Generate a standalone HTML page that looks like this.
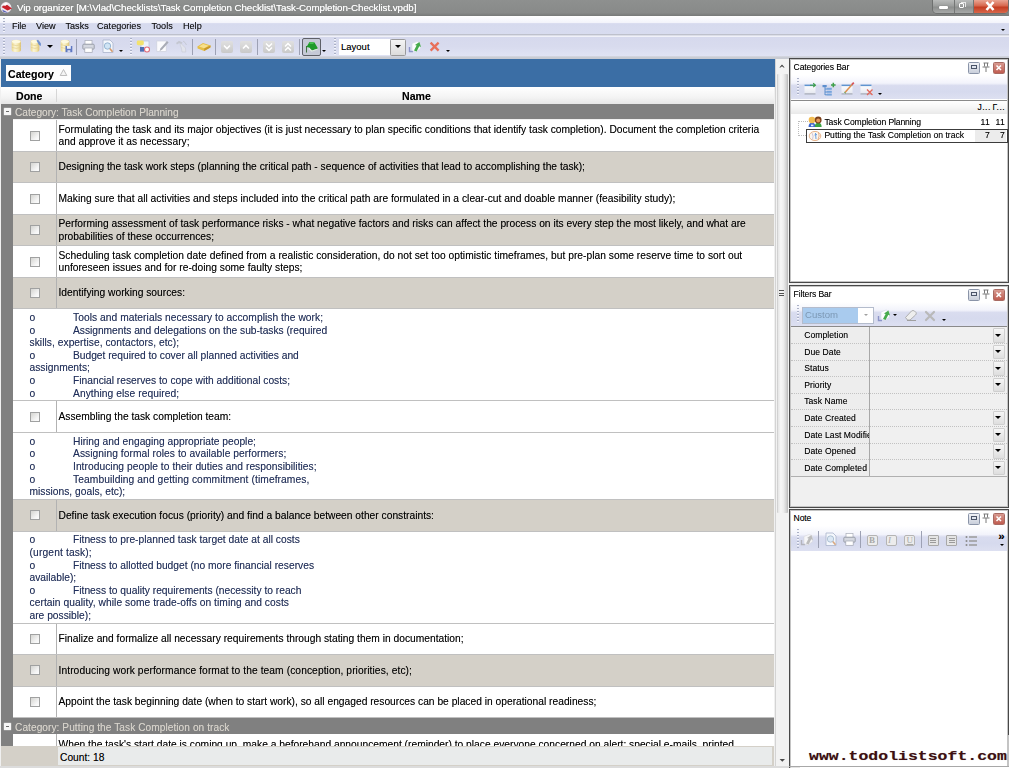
<!DOCTYPE html>
<html><head><meta charset="utf-8"><title>Vip organizer</title>
<style>
html,body{margin:0;padding:0;background:#f0f0f0;}
body{width:1009px;height:768px;overflow:hidden;position:relative;font-family:"Liberation Sans",sans-serif;font-size:10.25px;color:#000;}
.a{position:absolute;}
.t{position:absolute;white-space:pre;line-height:12.6px;text-shadow:0 0 .6px rgba(0,0,0,.4);}
#titlebar{left:0;top:0;width:1009px;height:15.5px;background:linear-gradient(#8e908f,#888a89 80%,#777978);}
#menubar{left:0;top:15.5px;width:1009px;height:19px;background:linear-gradient(#ffffff 0,#f3f4fb 6.5px,#eceef8 7px,#d6daee 7.6px,#d8dcef 100%);}
#toolbar{left:0;top:37px;width:1009px;height:19px;background:linear-gradient(#d6d9ed 0,#d8dbee 50%,#e0e3f3 100%);}
.row{position:absolute;left:13px;width:761px;}
.gray{background:#d4d0c8;}
.white{background:#fff;}
.cb{position:absolute;width:8px;height:8px;border:1px solid #a0a1a1;background:linear-gradient(135deg,#d9d9d6 10%,#f6f6f6 70%,#fdfdfd);}
.grp{position:absolute;left:1px;width:773px;background:#808080;color:#d4d0c8;height:15.5px;}
.note{color:#1f2f5f;}
.grip{width:1.5px;background:repeating-linear-gradient(#aab0c6 0,#aab0c6 1px,#f4f5fb 1px,#f4f5fb 2px,transparent 2px,transparent 3px);}
.m{top:19.8px;font-size:9.1px;color:#111;}
.arr{position:absolute;width:0;height:0;border-style:solid;border-color:#000 transparent transparent transparent;border-width:3px 3px 0 3px;}
.arr.s{border-width:2.4px 2.2px 0 2.2px;}
.sep{top:38.5px;width:1px;height:16.5px;background:#9da1b4;}
.gb{top:41px;width:12px;height:11.5px;border-radius:2px;background:linear-gradient(#e0e0e0,#c9c9c9);}
.p{font-size:8.6px;line-height:11px;letter-spacing:-.12px;}
.sep2{top:530.5px;width:1px;height:17px;background:#9da1b4;}
#wrap{position:absolute;left:0;top:0;width:1009px;height:768px;overflow:hidden;opacity:.999;}
</style></head><body><div id="wrap">
<!-- title bar -->
<div class="a" id="titlebar"></div>
<div class="t" style="left:17px;top:1.8px;color:#fff;font-size:9.8px;letter-spacing:-.08px;text-shadow:0 0 .7px rgba(255,255,255,.9),0 0 1.5px #6a6c6b;">Vip organizer [M:\Vlad\Checklists\Task Completion Checklist\Task-Completion-Checklist.vpdb]</div>
<div class="a" id="menubar"></div>
<div class="a" style="left:0;top:34px;width:1009px;height:1px;background:#bec1cc;"></div><div class="a" style="left:0;top:35px;width:1009px;height:1px;background:#dcdee8;"></div><div class="a" style="left:0;top:36px;width:1009px;height:1px;background:#f0f1f8;"></div>
<div class="a" id="toolbar"></div>
<div class="a" style="left:0;top:56px;width:1009px;height:3px;background:linear-gradient(#d6d8e2,#c9ccd4 50%,#c6c9d1);"></div>

<!-- main grid -->
<div class="a" id="blueband" style="left:1px;top:59px;width:773.5px;height:28px;background:#3b6ea5;"></div>
<div class="a" style="left:6px;top:65px;width:65px;height:16px;background:#fdfdfd;"></div>
<div class="a" id="hdr" style="left:1px;top:87px;width:773px;height:16.5px;background:linear-gradient(#fff,#f4f4f4 60%,#e6e6e6);"></div>
<div class="a" id="stripe" style="left:1px;top:104px;width:12px;height:642px;background:#808080;"></div>
<div class="grp" style="top:103.70px;height:15.6px;"></div>
<div class="a" style="left:4.3px;top:108.00px;width:6.6px;height:6.6px;background:#f6f6f6;border-radius:.5px;box-shadow:0 0 0 .5px #a8a8a8;"></div>
<div class="a" style="left:5.8px;top:110.80px;width:3.7px;height:1.1px;background:#6a6a6a;"></div>
<div class="t" style="left:15px;top:106.50px;color:#d8d4cc;font-size:10.15px;text-shadow:0 0 .5px rgba(216,212,204,.5);">Category: Task Completion Planning</div>
<div class="row white" style="top:119.75px;height:31.50px;"></div>
<div class="a" style="left:56px;top:119.75px;width:1px;height:31.50px;background:#b2b2b2;"></div>
<div class="cb" style="left:29.5px;top:130.50px;"></div>
<div class="t" style="left:58.5px;top:123.50px;">Formulating the task and its major objectives (it is just necessary to plan specific conditions that identify task completion). Document the completion criteria</div>
<div class="t" style="left:58.5px;top:136.10px;">and approve it as necessary;</div>
<div class="row gray" style="top:151.25px;height:31.50px;"></div>
<div class="a" style="left:56px;top:151.25px;width:1px;height:31.50px;background:#b2b2b2;"></div>
<div class="cb" style="left:29.5px;top:162.00px;"></div>
<div class="t" style="left:58.5px;top:161.30px;">Designing the task work steps (planning the critical path - sequence of activities that lead to accomplishing the task);</div>
<div class="row white" style="top:182.75px;height:31.50px;"></div>
<div class="a" style="left:56px;top:182.75px;width:1px;height:31.50px;background:#b2b2b2;"></div>
<div class="cb" style="left:29.5px;top:193.50px;"></div>
<div class="t" style="left:58.5px;top:192.80px;letter-spacing:0.019px;">Making sure that all activities and steps included into the critical path are formulated in a clear-cut and doable manner (feasibility study);</div>
<div class="row gray" style="top:214.25px;height:31.50px;"></div>
<div class="a" style="left:56px;top:214.25px;width:1px;height:31.50px;background:#b2b2b2;"></div>
<div class="cb" style="left:29.5px;top:225.00px;"></div>
<div class="t" style="left:58.5px;top:218.00px;">Performing assessment of task performance risks - what negative factors and risks can affect the process on its every step the most likely, and what are</div>
<div class="t" style="left:58.5px;top:230.60px;">probabilities of these occurrences;</div>
<div class="row white" style="top:245.75px;height:31.50px;"></div>
<div class="a" style="left:56px;top:245.75px;width:1px;height:31.50px;background:#b2b2b2;"></div>
<div class="cb" style="left:29.5px;top:256.50px;"></div>
<div class="t" style="left:58.5px;top:249.50px;letter-spacing:0.023px;">Scheduling task completion date defined from a realistic consideration, do not set too optimistic timeframes, but pre-plan some reserve time to sort out</div>
<div class="t" style="left:58.5px;top:262.10px;">unforeseen issues and for re-doing some faulty steps;</div>
<div class="row gray" style="top:277.25px;height:31.50px;"></div>
<div class="a" style="left:56px;top:277.25px;width:1px;height:31.50px;background:#b2b2b2;"></div>
<div class="cb" style="left:29.5px;top:288.00px;"></div>
<div class="t" style="left:58.5px;top:287.30px;">Identifying working sources:</div>
<div class="row white" style="top:308.75px;height:92.20px;"></div>
<div class="t note" style="left:29.5px;top:312.05px;">o</div>
<div class="t note" style="left:73px;top:312.05px;letter-spacing:0.043px;">Tools and materials necessary to accomplish the work;</div>
<div class="t note" style="left:29.5px;top:324.65px;">o</div>
<div class="t note" style="left:73px;top:324.65px;letter-spacing:-0.03px;">Assignments and delegations on the sub-tasks (required</div>
<div class="t note" style="left:29.5px;top:337.25px;letter-spacing:0.04px;">skills, expertise, contactors, etc);</div>
<div class="t note" style="left:29.5px;top:349.85px;">o</div>
<div class="t note" style="left:73px;top:349.85px;letter-spacing:-0.02px;">Budget required to cover all planned activities and</div>
<div class="t note" style="left:29.5px;top:362.45px;">assignments;</div>
<div class="t note" style="left:29.5px;top:375.05px;">o</div>
<div class="t note" style="left:73px;top:375.05px;">Financial reserves to cope with additional costs;</div>
<div class="t note" style="left:29.5px;top:387.65px;">o</div>
<div class="t note" style="left:73px;top:387.65px;letter-spacing:0.06px;">Anything else required;</div>
<div class="row white" style="top:400.95px;height:31.50px;"></div>
<div class="a" style="left:56px;top:400.95px;width:1px;height:31.50px;background:#b2b2b2;"></div>
<div class="cb" style="left:29.5px;top:411.70px;"></div>
<div class="t" style="left:58.5px;top:411.00px;">Assembling the task completion team:</div>
<div class="row white" style="top:432.45px;height:67.10px;"></div>
<div class="t note" style="left:29.5px;top:435.75px;">o</div>
<div class="t note" style="left:73px;top:435.75px;">Hiring and engaging appropriate people;</div>
<div class="t note" style="left:29.5px;top:448.35px;">o</div>
<div class="t note" style="left:73px;top:448.35px;letter-spacing:0.053px;">Assigning formal roles to available performers;</div>
<div class="t note" style="left:29.5px;top:460.95px;">o</div>
<div class="t note" style="left:73px;top:460.95px;letter-spacing:0.036px;">Introducing people to their duties and responsibilities;</div>
<div class="t note" style="left:29.5px;top:473.55px;">o</div>
<div class="t note" style="left:73px;top:473.55px;letter-spacing:0.083px;">Teambuilding and getting commitment (timeframes,</div>
<div class="t note" style="left:29.5px;top:486.15px;">missions, goals, etc);</div>
<div class="row gray" style="top:499.55px;height:31.50px;"></div>
<div class="a" style="left:56px;top:499.55px;width:1px;height:31.50px;background:#b2b2b2;"></div>
<div class="cb" style="left:29.5px;top:510.30px;"></div>
<div class="t" style="left:58.5px;top:509.60px;">Define task execution focus (priority) and find a balance between other constraints:</div>
<div class="row white" style="top:531.05px;height:92.10px;"></div>
<div class="t note" style="left:29.5px;top:534.35px;">o</div>
<div class="t note" style="left:73px;top:534.35px;">Fitness to pre-planned task target date at all costs</div>
<div class="t note" style="left:29.5px;top:546.95px;letter-spacing:0.14px;">(urgent task);</div>
<div class="t note" style="left:29.5px;top:559.55px;">o</div>
<div class="t note" style="left:73px;top:559.55px;">Fitness to allotted budget (no more financial reserves</div>
<div class="t note" style="left:29.5px;top:572.15px;">available);</div>
<div class="t note" style="left:29.5px;top:584.75px;">o</div>
<div class="t note" style="left:73px;top:584.75px;">Fitness to quality requirements (necessity to reach</div>
<div class="t note" style="left:29.5px;top:597.35px;letter-spacing:0.05px;">certain quality, while some trade-offs on timing and costs</div>
<div class="t note" style="left:29.5px;top:609.95px;">are possible);</div>
<div class="row white" style="top:623.15px;height:31.50px;"></div>
<div class="a" style="left:56px;top:623.15px;width:1px;height:31.50px;background:#b2b2b2;"></div>
<div class="cb" style="left:29.5px;top:633.90px;"></div>
<div class="t" style="left:58.5px;top:633.20px;">Finalize and formalize all necessary requirements through stating them in documentation;</div>
<div class="row gray" style="top:654.65px;height:31.50px;"></div>
<div class="a" style="left:56px;top:654.65px;width:1px;height:31.50px;background:#b2b2b2;"></div>
<div class="cb" style="left:29.5px;top:665.40px;"></div>
<div class="t" style="left:58.5px;top:664.70px;letter-spacing:0.077px;">Introducing work performance format to the team (conception, priorities, etc);</div>
<div class="row white" style="top:686.15px;height:31.50px;"></div>
<div class="a" style="left:56px;top:686.15px;width:1px;height:31.50px;background:#b2b2b2;"></div>
<div class="cb" style="left:29.5px;top:696.90px;"></div>
<div class="t" style="left:58.5px;top:696.20px;">Appoint the task beginning date (when to start work), so all engaged resources can be placed in operational readiness;</div>
<div class="a" style="left:13px;top:151px;width:761px;height:1px;background:#c0c0c0;"></div>
<div class="a" style="left:13px;top:182px;width:761px;height:1px;background:#c0c0c0;"></div>
<div class="a" style="left:13px;top:214px;width:761px;height:1px;background:#c0c0c0;"></div>
<div class="a" style="left:13px;top:245px;width:761px;height:1px;background:#c0c0c0;"></div>
<div class="a" style="left:13px;top:277px;width:761px;height:1px;background:#c0c0c0;"></div>
<div class="a" style="left:13px;top:308px;width:761px;height:1px;background:#c0c0c0;"></div>
<div class="a" style="left:13px;top:400px;width:761px;height:1px;background:#c0c0c0;"></div>
<div class="a" style="left:13px;top:432px;width:761px;height:1px;background:#c0c0c0;"></div>
<div class="a" style="left:13px;top:499px;width:761px;height:1px;background:#c0c0c0;"></div>
<div class="a" style="left:13px;top:531px;width:761px;height:1px;background:#c0c0c0;"></div>
<div class="a" style="left:13px;top:623px;width:761px;height:1px;background:#c0c0c0;"></div>
<div class="a" style="left:13px;top:654px;width:761px;height:1px;background:#c0c0c0;"></div>
<div class="a" style="left:13px;top:686px;width:761px;height:1px;background:#c0c0c0;"></div>
<div class="a" style="left:13px;top:717px;width:761px;height:1px;background:#c0c0c0;"></div>
<div class="grp" style="top:717.65px;height:16.5px;"></div>
<div class="a" style="left:4.3px;top:723.05px;width:6.6px;height:6.6px;background:#f6f6f6;border-radius:.5px;box-shadow:0 0 0 .5px #a8a8a8;"></div>
<div class="a" style="left:5.8px;top:725.85px;width:3.7px;height:1.1px;background:#6a6a6a;"></div>
<div class="t" style="left:15px;top:721.55px;color:#d8d4cc;font-size:10.15px;text-shadow:0 0 .5px rgba(216,212,204,.5);letter-spacing:0.065px;">Category: Putting the Task Completion on track</div>
<div class="row white" style="top:734.15px;height:11.5px;"></div>
<div class="a" style="left:56px;top:734.15px;width:1px;height:12px;background:#b2b2b2;"></div>
<div class="a" style="left:57px;top:734.15px;width:717px;height:11.5px;overflow:hidden;"><div class="t" style="left:1.5px;top:5.2px;">When the task's start date is coming up, make a beforehand announcement (reminder) to place everyone concerned on alert: special e-mails, printed</div></div>
<!-- app icon -->
<svg class="a" style="left:0;top:1.3px;" width="13" height="13" viewBox="0 0 13 13"><circle cx="6" cy="6.5" r="5.4" fill="#ece4ec"/><path d="M1.5 6 L6 3 L12 7.5 L7.5 9.5 Z" fill="#c8202a"/><path d="M2 8.5 L6 10.5 L8 12 L3.5 11 Z" fill="#5a64b8"/><path d="M3 3.5 L6 1.5 L8 3 L5 5 Z" fill="#fff"/></svg>
<!-- window buttons -->
<div class="a" style="left:933px;top:0;width:74.5px;height:12.5px;border-radius:0 0 4px 4px;background:linear-gradient(#b9bbba,#9c9e9d 45%,#8d8f8e 55%,#a7a9a8);box-shadow:0 0 0 1px #6e706f;"></div>
<div class="a" style="left:973px;top:0;width:34.5px;height:12.5px;border-radius:0 0 4px 0;background:linear-gradient(#e9a593,#d7674e 45%,#c43d22 55%,#d9674a);"></div>
<div class="a" style="left:953.5px;top:0;width:1px;height:12.5px;background:#747675;"></div>
<div class="a" style="left:972.5px;top:0;width:1px;height:12.5px;background:#747675;"></div>
<div class="a" style="left:939px;top:6px;width:9px;height:2.5px;background:#fff;border-radius:1px;box-shadow:0 0 1px #555;"></div>
<div class="a" style="left:958.8px;top:3.2px;width:3.6px;height:3.2px;border:1.6px solid #fff;border-radius:1px;box-shadow:0 0 1px #555;"></div><div class="a" style="left:960.5px;top:1.8px;width:4.5px;height:1.2px;background:#e8e8e8;"></div><div class="a" style="left:965px;top:1.8px;width:1.2px;height:5px;background:#e8e8e8;"></div>
<svg class="a" style="left:984px;top:1px;" width="12" height="10" viewBox="0 0 12 10"><path d="M2.5 1 L9.5 9 M9.5 1 L2.5 9" stroke="#fff" stroke-width="2.6"/></svg>
<!-- menubar grips -->
<div class="a grip" style="left:3px;top:18px;height:14px;"></div>
<div class="a grip" style="left:3px;top:38px;height:17px;"></div>
<div class="a grip" style="left:130px;top:38px;height:17px;"></div>
<div class="a grip" style="left:334px;top:38px;height:17px;"></div>
<div class="t m" style="left:12px;letter-spacing:-.15px;">File</div>
<div class="t m" style="left:36px;">View</div>
<div class="t m" style="left:65.5px;">Tasks</div>
<div class="t m" style="left:97px;">Categories</div>
<div class="t m" style="left:151.5px;">Tools</div>
<div class="t m" style="left:183px;">Help</div>
<div class="arr s" style="left:1001px;top:28.5px;"></div>
<!-- toolbar icons -->
<svg class="a" style="left:0;top:0;" width="0" height="0"><defs><linearGradient id="cg" x1="0" x2="1" y1="0" y2="0"><stop offset="0" stop-color="#ecd98e"/><stop offset=".35" stop-color="#fbf5d6"/><stop offset=".7" stop-color="#f3e6ad"/><stop offset="1" stop-color="#d9bf74"/></linearGradient></defs></svg>
<svg class="a" style="left:11px;top:39px;" width="11" height="14" viewBox="0 0 11 14"><path d="M.7 2.6 Q.7 .8 5.3 .8 Q10 .8 10 2.6 V11 Q10 13 5.3 13 Q.7 13 .7 11 Z" fill="url(#cg)"/><ellipse cx="5.3" cy="2.6" rx="4.4" ry="1.6" fill="#fdf9e0"/><path d="M.9 5.6 Q5.3 7.6 9.8 5.6 M.9 8.4 Q5.3 10.4 9.8 8.4" stroke="#e3cf8c" fill="none" stroke-width=".7"/></svg>
<svg class="a" style="left:30px;top:39px;" width="12" height="14" viewBox="0 0 12 14"><path d="M.7 2.6 Q.7 .8 5 .8 Q9.3 .8 9.3 2.6 V11 Q9.3 13 5 13 Q.7 13 .7 11 Z" fill="url(#cg)"/><ellipse cx="5" cy="2.6" rx="4" ry="1.6" fill="#fdf9e0"/><path d="M.9 5.6 Q5 7.6 9.1 5.6 M.9 8.4 Q5 10.4 9.1 8.4" stroke="#e3cf8c" fill="none" stroke-width=".7"/><path d="M6.5 1.5 L8 .8 L11 4.5 L10.8 7 L9 6 Z" fill="#6d8fcf"/></svg>
<div class="arr" style="left:47px;top:44.8px;border-width:3.2px 3.1px 0 3.1px;"></div>
<svg class="a" style="left:59.5px;top:39px;" width="13" height="14" viewBox="0 0 13 14"><path d="M.7 2.6 Q.7 .8 5 .8 Q9.3 .8 9.3 2.6 V11 Q9.3 13 5 13 Q.7 13 .7 11 Z" fill="url(#cg)"/><ellipse cx="5" cy="2.6" rx="4" ry="1.6" fill="#fdf9e0"/><path d="M.9 5.6 Q5 7.6 9.1 5.6 M.9 8.4 Q5 10.4 9.1 8.4" stroke="#e3cf8c" fill="none" stroke-width=".7"/><rect x="5.5" y="7" width="6.8" height="6.2" fill="#5f78c2"/><rect x="7" y="7" width="3.8" height="2.8" fill="#eef1fa"/><rect x="7.5" y="11.2" width="2.8" height="2" fill="#d5daf0"/></svg>
<div class="a sep" style="left:76px;"></div>
<svg class="a" style="left:82px;top:40px;" width="13" height="13" viewBox="0 0 13 13"><rect x="3" y="0.5" width="7" height="4" fill="#fff" stroke="#a9adb8" stroke-width=".7"/><rect x="0.8" y="4.2" width="11.4" height="5" rx="1" fill="#d5d8e0" stroke="#8c909c" stroke-width=".8"/><rect x="2.8" y="8" width="7.4" height="4.3" fill="#fff" stroke="#a0a4b0" stroke-width=".7"/></svg>
<svg class="a" style="left:101px;top:39px;" width="14" height="15" viewBox="0 0 14 15"><path d="M2 1 H9 L12 4 V13.5 H2 Z" fill="#f4f7fc" stroke="#aab4cc" stroke-width=".8"/><circle cx="6.5" cy="7" r="3.2" fill="#cfe4f4" stroke="#8fb0cf" stroke-width=".9"/><path d="M8.8 9.6 L11.5 12.8" stroke="#d69a6a" stroke-width="1.6"/></svg>
<div class="arr s" style="left:119px;top:50px;"></div>
<!-- toolbar 2 -->
<svg class="a" style="left:136px;top:39px;" width="15" height="15" viewBox="0 0 15 15"><rect x="5" y="2" width="8" height="10" fill="#eef3fb" stroke="#b4c2de" stroke-width=".7"/><rect x=".8" y="1.6" width="7" height="4.6" rx="1.4" fill="#f3e26e"/><rect x="4" y="8" width="4.2" height="4.6" fill="#4f6fb4"/><circle cx="11" cy="10.5" r="2.5" fill="#fff" stroke="#e26a78" stroke-width="1.1"/></svg>
<svg class="a" style="left:155px;top:39px;" width="15" height="15" viewBox="0 0 15 15"><rect x="1.8" y="2" width="9.4" height="10.4" fill="#fbfbfd" stroke="#cfd2dc" stroke-width=".7"/><path d="M4.6 12 L5.4 9.4 L12 2 L13.6 3.4 L7 10.8 Z" fill="#a9acb6"/></svg>
<svg class="a" style="left:174px;top:39px;" width="15" height="15" viewBox="0 0 15 15"><path d="M2 4 L5 1.8 L8.5 3.5 L7.8 5 L5 4.2 L3 5.4 Z" fill="#c4c7d1"/><path d="M7 4.5 L11.5 9 L11.8 13 L8 13 L7.4 9 L6 5.8 Z" fill="#e2e4ec" stroke="#c6c9d4" stroke-width=".6"/><path d="M9 2 L11 3.5 L12.5 6" stroke="#c4c7d1" stroke-width=".9" fill="none"/></svg>
<div class="a sep" style="left:192px;"></div>
<svg class="a" style="left:196px;top:41px;" width="16" height="12" viewBox="0 0 16 12"><path d="M1.4 5.6 L7 2 L14.6 4.4 L14.4 6.6 L8.2 10 L1.6 7.4 Z" fill="#e6bf48"/><path d="M3 5.6 L7.1 3.1 L12.6 4.8 L8.2 7.2 Z" fill="#f7e08e"/><path d="M8.2 7.4 L14.6 4.6 L14.4 6.6 L8.2 10 Z" fill="#c8982c"/></svg>
<div class="a sep" style="left:215px;"></div>
<div class="a gb" style="left:221px;"></div><svg class="a" style="left:221px;top:41px;" width="12" height="12" viewBox="0 0 12 12"><path d="M3 4.5 L6 7.5 L9 4.5" stroke="#fff" stroke-width="1.6" fill="none"/></svg>
<div class="a gb" style="left:240px;"></div><svg class="a" style="left:240px;top:41px;" width="12" height="12" viewBox="0 0 12 12"><path d="M3 7.5 L6 4.5 L9 7.5" stroke="#fff" stroke-width="1.6" fill="none"/></svg>
<div class="a sep" style="left:257px;"></div>
<div class="a gb" style="left:263px;"></div><svg class="a" style="left:263px;top:41px;" width="12" height="12" viewBox="0 0 12 12"><path d="M3 2.5 L6 5.5 L9 2.5 M3 6.5 L6 9.5 L9 6.5" stroke="#fff" stroke-width="1.5" fill="none"/></svg>
<div class="a gb" style="left:282px;"></div><svg class="a" style="left:282px;top:41px;" width="12" height="12" viewBox="0 0 12 12"><path d="M3 5.5 L6 2.5 L9 5.5 M3 9.5 L6 6.5 L9 9.5" stroke="#fff" stroke-width="1.5" fill="none"/></svg>
<div class="a sep" style="left:299px;"></div>
<div class="a" style="left:301.5px;top:38px;width:17px;height:15.5px;border:1.2px solid #5e6068;border-radius:2px;background:#c5c9d6;"></div>
<svg class="a" style="left:303px;top:40px;" width="16" height="14" viewBox="0 0 16 14"><path d="M3.5 12.5 V6" stroke="#3f6f3f" stroke-width="1"/><path d="M3.5 7 L6.5 2 L11.5 2.5 L15 8.5 L9 10.5 L6 7.5 Z" fill="#1f9a2a"/><path d="M6 7.5 L9 10.5 L15 8.5 L14.5 9.8 L8.5 11.8 L5.5 9 Z" fill="#dfe8e0"/><path d="M6.5 2 L11.5 2.5 L10 4 L6.5 4 Z" fill="#47c24f"/></svg>
<div class="arr s" style="left:322px;top:50px;"></div>
<!-- layout combo -->
<div class="a" style="left:338.5px;top:38.5px;width:51px;height:16px;background:#fff;"></div>
<div class="t" style="left:341px;top:40.5px;font-size:9.5px;">Layout</div>
<div class="a" style="left:389.5px;top:38.5px;width:14.5px;height:15px;border:1px solid #9a9a9a;border-radius:1.5px;background:linear-gradient(#f4f4f4,#dcdcdc);"></div>
<div class="arr" style="left:394.5px;top:44.5px;border-width:3.2px 3px 0 3px;"></div>
<svg class="a" style="left:408px;top:40px;" width="15" height="14" viewBox="0 0 15 14"><path d="M1.5 7 V11.5 H5" stroke="#8d95c8" stroke-width="1.4" fill="none"/><path d="M4 3.5 L9 1.5 L12 2.5 L12.5 8.5 L8 12 L4 10.5 Z" fill="#fbfcfe" stroke="#d4d8e4" stroke-width=".6"/><path d="M6 10.5 L8.6 5.5 L7 4.9 L11.4 2.1 L13 6.9 L11.3 6.3 L8.6 11.5 Z" fill="#46ab4c"/></svg>
<svg class="a" style="left:428px;top:40px;" width="13" height="13" viewBox="0 0 13 13"><path d="M2.6 2.6 L10.6 10.6 M10.6 2.6 L2.6 10.6" stroke="#e8705a" stroke-width="2.3"/></svg>
<div class="arr s" style="left:446px;top:50px;"></div>
<!-- category box + header -->
<div class="t" style="left:8px;top:67.6px;font-size:10.6px;font-weight:bold;">Category</div>
<svg class="a" style="left:59px;top:68px;" width="9" height="9" viewBox="0 0 9 9"><path d="M1.2 7.5 L4.5 1.5 L7.8 7.5 Z" fill="#f4f4f4" stroke="#b5b5b5" stroke-width=".9"/></svg>
<div class="t" style="left:16px;top:90px;font-size:10.6px;font-weight:bold;">Done</div>
<div class="t" style="left:402px;top:90px;font-size:10.6px;font-weight:bold;">Name</div>
<div class="a" style="left:56px;top:88.5px;width:1px;height:13px;background:#d6d6d6;"></div>

<!-- footer -->
<div class="a" style="left:1px;top:745.5px;width:773px;height:20.5px;background:#d4d0c8;"></div>
<div class="a" style="left:57.5px;top:747px;width:714.5px;height:18px;background:#e9ebeb;"></div>
<div class="t" style="left:60px;top:751.6px;">Count: 18</div>

<!-- scrollbar -->
<div class="a" id="vscroll" style="left:776px;top:59px;width:13px;height:707px;background:#f2f2f2;"></div>
<div class="a" style="left:775px;top:59px;width:1px;height:707px;background:#d4d4d4;"></div><div class="a" style="left:776.5px;top:73.5px;width:11.5px;height:439.5px;background:linear-gradient(90deg,#c6c6c6 0,#e9e9e9 14%,#f6f6f6 35%,#ececec 60%,#d2d2d2 85%,#b4b4b4 100%);border-radius:1px;"></div>

<!-- right panels -->
<div class="a" style="left:789px;top:58px;width:217.5px;height:223px;background:#fff;border:1px solid #484848;box-shadow:inset 0 0 0 1px #c4c4c4;"></div>
<div class="t p" style="left:793.6px;top:61.9px;">Categories Bar</div>
<div class="a" style="left:790.5px;top:75px;width:216.5px;height:24px;background:linear-gradient(#fff 0,#f2f3fb 34%,#d9dcef 44%,#d6daee 70%,#dde0f1 100%);"></div>
<div class="a grip" style="left:797px;top:78px;height:18px;"></div>
<div class="a" style="left:968px;top:62px;width:9.5px;height:9.5px;border:1px solid #8a94a8;border-radius:1.5px;background:linear-gradient(#f0f2f6,#c9cfdb);"></div>
<div class="a" style="left:970.8px;top:64.8px;width:4px;height:2.6px;border:1px solid #4a5468;background:#dfe4ee;"></div>
<svg class="a" style="left:981px;top:62px;" width="10" height="12" viewBox="0 0 10 12"><path d="M2.5 1 H7.5 M3.5 1 V4.5 M6.5 1 V4.5 M1.5 5 H8.5 M5 5 V10" stroke="#7a7a7a" stroke-width="1" fill="none"/></svg>
<div class="a" style="left:993px;top:62px;width:9.5px;height:9.5px;border:1px solid #a86a62;border-radius:1.5px;background:linear-gradient(#d89a90,#bf5c50);"></div>
<svg class="a" style="left:995px;top:64px;" width="8" height="8" viewBox="0 0 8 8"><path d="M1.5 1.5 L6 6 M6 1.5 L1.5 6" stroke="#fff" stroke-width="1.5"/></svg>
<div class="a" style="left:790.5px;top:99.5px;width:216.5px;height:1px;background:#8a8a8a;"></div>
<div class="a" style="left:790.5px;top:100.5px;width:216.5px;height:13px;background:linear-gradient(#fff,#f6f6f6 50%,#e9e9e9);"></div>
<div class="t p" style="left:977.5px;top:102px;letter-spacing:.45px;">J...</div>
<div class="t p" style="left:992.5px;top:102px;letter-spacing:.45px;">&#x413;...</div>
<svg class="a" style="left:0;top:0;" width="0" height="0"><defs><linearGradient id="wg" x1="0" x2="0" y1="0" y2="1"><stop offset="0" stop-color="#ffffff"/><stop offset="1" stop-color="#e4e7f0"/></linearGradient></defs></svg>
<svg class="a" style="left:803.5px;top:82px;" width="13" height="13" viewBox="0 0 13 13"><rect x="0.5" y="3" width="11" height="9" fill="url(#wg)"/><rect x="0.5" y="2.6" width="11" height="1.5" fill="#5f94d0"/><rect x="0.5" y="11.3" width="11" height="1.2" fill="#a4a9b6"/><path d="M6 3.2 H11 M9.2 1.3 L11.4 3.2 L9.2 5.1" stroke="#3fa04a" stroke-width="1.15" fill="none"/></svg>
<svg class="a" style="left:821.5px;top:81.5px;" width="15" height="14" viewBox="0 0 15 14"><rect x=".5" y="3" width="4.2" height="2.2" fill="#5d8fce"/><path d="M3 5 V13 M3 7 H5 M3 10 H5 M3 12.8 H5" stroke="#5d8fce" stroke-width="1"/><rect x="4.8" y="5.8" width="5" height="2" fill="#77a4dc"/><rect x="4.8" y="8.8" width="5" height="2" fill="#77a4dc"/><rect x="4.8" y="11.6" width="5" height="2" fill="#77a4dc"/><path d="M9 3 H13.6 M11.3 .7 V5.3" stroke="#3fa04a" stroke-width="1.5"/></svg>
<svg class="a" style="left:841px;top:82px;" width="14" height="13" viewBox="0 0 14 13"><rect x="0.5" y="3" width="11" height="9" fill="url(#wg)"/><rect x="0.5" y="2.6" width="11" height="1.5" fill="#5f94d0"/><rect x="0.5" y="11.3" width="11" height="1.2" fill="#a4a9b6"/><path d="M4 10.5 L11.5 2" stroke="#dd8f4e" stroke-width="1.5"/><path d="M11 2.6 L12.8 .6" stroke="#d6535a" stroke-width="1.7"/><path d="M3.2 10.2 L5 11.3" stroke="#6aa860" stroke-width="1"/></svg>
<svg class="a" style="left:860px;top:82px;" width="14" height="14" viewBox="0 0 14 14"><rect x="0.5" y="3" width="11" height="9" fill="url(#wg)"/><rect x="0.5" y="2.6" width="11" height="1.5" fill="#5f94d0"/><rect x="0.5" y="11.3" width="11" height="1.2" fill="#a4a9b6"/><path d="M7 7.5 L12.5 13 M12.5 7.5 L7 13" stroke="#e2685c" stroke-width="1.3"/></svg>
<div class="arr s" style="left:878px;top:93px;"></div>
<div class="a" style="left:798px;top:121px;width:0;height:14.5px;border-left:1px dotted #bcbcbc;"></div>
<div class="a" style="left:798px;top:120.6px;width:9.5px;height:0;border-top:1px dotted #bcbcbc;"></div>
<div class="a" style="left:798px;top:135px;width:8px;height:0;border-top:1px dotted #bcbcbc;"></div>
<svg class="a" style="left:808px;top:115.8px;" width="15" height="12" viewBox="0 0 15 12"><path d="M.6 11 Q.6 6.8 4 6.8 Q7.4 6.8 7.4 11 Z" fill="#3d66cc"/><path d="M6.8 11 Q6.8 6.8 10.3 6.8 Q13.6 6.8 13.6 11 Z" fill="#3ba343"/><circle cx="4" cy="4" r="3.3" fill="#f2bc52"/><circle cx="10.2" cy="4" r="3.4" fill="#7c3f18"/><circle cx="10.2" cy="4.6" r="2" fill="#e59a5c"/><rect x="3" y="8.6" width="2.4" height="1.6" fill="#e8eefc"/></svg>
<div class="t p" style="left:824.4px;top:116.7px;letter-spacing:-0.12px;">Task Completion Planning</div>
<div class="t p" style="left:980.5px;top:116.7px;letter-spacing:.4px;">11</div>
<div class="t p" style="left:995.5px;top:116.7px;letter-spacing:.4px;">11</div>
<div class="a" style="left:975px;top:129.5px;width:31px;height:12px;background:#ececec;"></div>
<div class="a" style="left:806px;top:128.5px;width:199.5px;height:12.5px;border:1px solid #3c3c3c;"></div>
<svg class="a" style="left:808px;top:129.5px;" width="15" height="12" viewBox="0 0 15 12"><ellipse cx="7" cy="6" rx="5.8" ry="4.6" fill="#fdf6ee" stroke="#e6b48c" stroke-width="1"/><path d="M4 3 Q6 6 4.5 9.5" stroke="#c8c0d8" stroke-width=".9" fill="none"/><path d="M7.5 3 L8 9 M6.5 5 L9 4.5" stroke="#6aa0e0" stroke-width="1" fill="none"/><path d="M10.5 2.5 Q12 6 10 9.5" stroke="#e0a070" stroke-width=".8" fill="none"/></svg>
<div class="t p" style="left:824.4px;top:130.2px;letter-spacing:-0.005px;">Putting the Task Completion on track</div>
<div class="t p" style="left:985px;top:130.2px;">7</div>
<div class="t p" style="left:1000px;top:130.2px;">7</div>
<div class="a" style="left:789px;top:285px;width:217.5px;height:221px;background:#fff;border:1px solid #484848;box-shadow:inset 0 0 0 1px #c4c4c4;"></div>
<div class="t p" style="left:793.6px;top:288.9px;">Filters Bar</div>
<div class="a" style="left:790.5px;top:302px;width:216.5px;height:23.5px;background:linear-gradient(#fff 0,#f2f3fb 34%,#d9dcef 44%,#d6daee 70%,#dde0f1 100%);"></div>
<div class="a grip" style="left:797px;top:305px;height:17.5px;"></div>
<div class="a" style="left:968px;top:289px;width:9.5px;height:9.5px;border:1px solid #8a94a8;border-radius:1.5px;background:linear-gradient(#f0f2f6,#c9cfdb);"></div>
<div class="a" style="left:970.8px;top:291.8px;width:4px;height:2.6px;border:1px solid #4a5468;background:#dfe4ee;"></div>
<svg class="a" style="left:981px;top:289px;" width="10" height="12" viewBox="0 0 10 12"><path d="M2.5 1 H7.5 M3.5 1 V4.5 M6.5 1 V4.5 M1.5 5 H8.5 M5 5 V10" stroke="#7a7a7a" stroke-width="1" fill="none"/></svg>
<div class="a" style="left:993px;top:289px;width:9.5px;height:9.5px;border:1px solid #a86a62;border-radius:1.5px;background:linear-gradient(#d89a90,#bf5c50);"></div>
<svg class="a" style="left:995px;top:291px;" width="8" height="8" viewBox="0 0 8 8"><path d="M1.5 1.5 L6 6 M6 1.5 L1.5 6" stroke="#fff" stroke-width="1.5"/></svg>
<div class="a" style="left:790.5px;top:325.5px;width:216.5px;height:1.5px;background:#8a8a8a;"></div>
<div class="a" style="left:790.5px;top:327px;width:216.5px;height:179px;background:#f0f0f0;"></div>
<div class="a" style="left:802px;top:307px;width:72px;height:16.5px;background:#fff;border:1px solid #b4bccc;box-sizing:border-box;"></div>
<div class="a" style="left:803px;top:308px;width:55px;height:14.5px;background:#a9cbee;"></div>
<div class="t" style="left:805px;top:309.3px;font-size:9.6px;color:#7c98b4;text-shadow:none;">Custom</div>
<div class="arr" style="left:863.5px;top:314px;border-top-color:#a0a0a0;border-width:2.6px 2.6px 0 2.6px;"></div>
<svg class="a" style="left:877px;top:308px;" width="15" height="15" viewBox="0 0 15 15"><path d="M1.5 8 V12.5 H5" stroke="#8d95c8" stroke-width="1.4" fill="none"/><path d="M4 4 L9 2 L12 3 L12.5 9 L8 12.5 L4 11 Z" fill="#fbfcfe" stroke="#d4d8e4" stroke-width=".6"/><path d="M6 11 L8.6 6 L7 5.4 L11.4 2.6 L13 7.4 L11.3 6.8 L8.6 12 Z" fill="#46ab4c"/></svg>
<div class="arr s" style="left:892.5px;top:313.5px;"></div>
<svg class="a" style="left:903px;top:309px;" width="16" height="13" viewBox="0 0 16 13"><path d="M2.5 8.5 L8.5 2 Q10 1 11.5 2 L13 3.5 Q13.8 5 12.5 6 L7 11 H4.5 Z" fill="#eeeeee" stroke="#a8a8a8" stroke-width=".9"/><path d="M4 11.5 H13" stroke="#a0a0a0" stroke-width="1"/></svg>
<svg class="a" style="left:924px;top:309.5px;" width="12" height="12" viewBox="0 0 12 12"><path d="M2 2 L10 10 M10 2 L2 10" stroke="#b9b9b9" stroke-width="2.2" stroke-linecap="round"/></svg>
<div class="arr s" style="left:941.5px;top:319px;"></div>
<div class="a" style="left:790.5px;top:327.70px;width:79px;height:16.55px;background:#ededed;overflow:hidden;"><div class="t p" style="left:13.7px;top:2.6px;letter-spacing:.05px;">Completion</div></div>
<div class="a" style="left:790.5px;top:343.25px;width:216.5px;height:0;border-top:1px dotted #c2c2c2;"></div>
<div class="a" style="left:992.5px;top:328.20px;width:12.5px;height:14.55px;background:linear-gradient(#f6f6f6,#dedede);border:1px solid #cfcfcf;box-sizing:border-box;border-radius:1px;"></div>
<div class="arr" style="left:995.4px;top:333.50px;border-width:3.9px 3.4px 0 3.4px;"></div>
<div class="a" style="left:790.5px;top:344.25px;width:79px;height:16.55px;background:#ededed;overflow:hidden;"><div class="t p" style="left:13.7px;top:2.6px;letter-spacing:.05px;">Due Date</div></div>
<div class="a" style="left:790.5px;top:359.80px;width:216.5px;height:0;border-top:1px dotted #c2c2c2;"></div>
<div class="a" style="left:992.5px;top:344.75px;width:12.5px;height:14.55px;background:linear-gradient(#f6f6f6,#dedede);border:1px solid #cfcfcf;box-sizing:border-box;border-radius:1px;"></div>
<div class="arr" style="left:995.4px;top:350.05px;border-width:3.9px 3.4px 0 3.4px;"></div>
<div class="a" style="left:790.5px;top:360.80px;width:79px;height:16.55px;background:#ededed;overflow:hidden;"><div class="t p" style="left:13.7px;top:2.6px;letter-spacing:.05px;">Status</div></div>
<div class="a" style="left:790.5px;top:376.35px;width:216.5px;height:0;border-top:1px dotted #c2c2c2;"></div>
<div class="a" style="left:992.5px;top:361.30px;width:12.5px;height:14.55px;background:linear-gradient(#f6f6f6,#dedede);border:1px solid #cfcfcf;box-sizing:border-box;border-radius:1px;"></div>
<div class="arr" style="left:995.4px;top:366.60px;border-width:3.9px 3.4px 0 3.4px;"></div>
<div class="a" style="left:790.5px;top:377.35px;width:79px;height:16.55px;background:#ededed;overflow:hidden;"><div class="t p" style="left:13.7px;top:2.6px;letter-spacing:.05px;">Priority</div></div>
<div class="a" style="left:790.5px;top:392.90px;width:216.5px;height:0;border-top:1px dotted #c2c2c2;"></div>
<div class="a" style="left:992.5px;top:377.85px;width:12.5px;height:14.55px;background:linear-gradient(#f6f6f6,#dedede);border:1px solid #cfcfcf;box-sizing:border-box;border-radius:1px;"></div>
<div class="arr" style="left:995.4px;top:383.15px;border-width:3.9px 3.4px 0 3.4px;"></div>
<div class="a" style="left:790.5px;top:393.90px;width:79px;height:16.55px;background:#ededed;overflow:hidden;"><div class="t p" style="left:13.7px;top:2.6px;letter-spacing:.05px;">Task Name</div></div>
<div class="a" style="left:790.5px;top:409.45px;width:216.5px;height:0;border-top:1px dotted #c2c2c2;"></div>
<div class="a" style="left:790.5px;top:410.45px;width:79px;height:16.55px;background:#ededed;overflow:hidden;"><div class="t p" style="left:13.7px;top:2.6px;letter-spacing:.05px;">Date Created</div></div>
<div class="a" style="left:790.5px;top:426.00px;width:216.5px;height:0;border-top:1px dotted #c2c2c2;"></div>
<div class="a" style="left:992.5px;top:410.95px;width:12.5px;height:14.55px;background:linear-gradient(#f6f6f6,#dedede);border:1px solid #cfcfcf;box-sizing:border-box;border-radius:1px;"></div>
<div class="arr" style="left:995.4px;top:416.25px;border-width:3.9px 3.4px 0 3.4px;"></div>
<div class="a" style="left:790.5px;top:427.00px;width:79px;height:16.55px;background:#ededed;overflow:hidden;"><div class="t p" style="left:13.7px;top:2.6px;letter-spacing:.05px;">Date Last Modifie</div></div>
<div class="a" style="left:790.5px;top:442.55px;width:216.5px;height:0;border-top:1px dotted #c2c2c2;"></div>
<div class="a" style="left:992.5px;top:427.50px;width:12.5px;height:14.55px;background:linear-gradient(#f6f6f6,#dedede);border:1px solid #cfcfcf;box-sizing:border-box;border-radius:1px;"></div>
<div class="arr" style="left:995.4px;top:432.80px;border-width:3.9px 3.4px 0 3.4px;"></div>
<div class="a" style="left:790.5px;top:443.55px;width:79px;height:16.55px;background:#ededed;overflow:hidden;"><div class="t p" style="left:13.7px;top:2.6px;letter-spacing:.05px;">Date Opened</div></div>
<div class="a" style="left:790.5px;top:459.10px;width:216.5px;height:0;border-top:1px dotted #c2c2c2;"></div>
<div class="a" style="left:992.5px;top:444.05px;width:12.5px;height:14.55px;background:linear-gradient(#f6f6f6,#dedede);border:1px solid #cfcfcf;box-sizing:border-box;border-radius:1px;"></div>
<div class="arr" style="left:995.4px;top:449.35px;border-width:3.9px 3.4px 0 3.4px;"></div>
<div class="a" style="left:790.5px;top:460.10px;width:79px;height:16.55px;background:#ededed;overflow:hidden;"><div class="t p" style="left:13.7px;top:2.6px;letter-spacing:.05px;">Date Completed</div></div>
<div class="a" style="left:790.5px;top:475.65px;width:216.5px;height:0;border-top:1px dotted #c2c2c2;"></div>
<div class="a" style="left:992.5px;top:460.60px;width:12.5px;height:14.55px;background:linear-gradient(#f6f6f6,#dedede);border:1px solid #cfcfcf;box-sizing:border-box;border-radius:1px;"></div>
<div class="arr" style="left:995.4px;top:465.90px;border-width:3.9px 3.4px 0 3.4px;"></div>
<div class="a" style="left:869px;top:327px;width:1px;height:149.65px;background:#a8a8a8;"></div>
<div class="a" style="left:790.5px;top:475.65px;width:216.5px;height:1px;background:#b0b0b0;"></div>
<div class="a" style="left:789px;top:509px;width:217.5px;height:258px;background:#fff;border:1px solid #484848;box-shadow:inset 0 0 0 1px #c4c4c4;"></div>
<div class="t p" style="left:793.6px;top:512.9px;">Note</div>
<div class="a" style="left:790.5px;top:526px;width:216.5px;height:25px;background:linear-gradient(#fff 0,#f2f3fb 34%,#d9dcef 44%,#d6daee 70%,#dde0f1 100%);"></div>
<div class="a grip" style="left:797px;top:529px;height:19px;"></div>
<div class="a" style="left:968px;top:513px;width:9.5px;height:9.5px;border:1px solid #8a94a8;border-radius:1.5px;background:linear-gradient(#f0f2f6,#c9cfdb);"></div>
<div class="a" style="left:970.8px;top:515.8px;width:4px;height:2.6px;border:1px solid #4a5468;background:#dfe4ee;"></div>
<svg class="a" style="left:981px;top:513px;" width="10" height="12" viewBox="0 0 10 12"><path d="M2.5 1 H7.5 M3.5 1 V4.5 M6.5 1 V4.5 M1.5 5 H8.5 M5 5 V10" stroke="#7a7a7a" stroke-width="1" fill="none"/></svg>
<div class="a" style="left:993px;top:513px;width:9.5px;height:9.5px;border:1px solid #a86a62;border-radius:1.5px;background:linear-gradient(#d89a90,#bf5c50);"></div>
<svg class="a" style="left:995px;top:515px;" width="8" height="8" viewBox="0 0 8 8"><path d="M1.5 1.5 L6 6 M6 1.5 L1.5 6" stroke="#fff" stroke-width="1.5"/></svg>
<div class="a" style="left:790.5px;top:766px;width:218px;height:2px;background:#8c8c8c;"></div>
<div class="a" style="left:790.5px;top:767.2px;width:218px;height:1px;background:#e4e4e4;"></div>
<svg class="a" style="left:800px;top:533px;" width="15" height="14" viewBox="0 0 15 14"><path d="M1.5 7 V11.5 H5" stroke="#b4b4bc" stroke-width="1.4" fill="none"/><path d="M4 3.5 L9 1.5 L12 2.5 L12.5 8.5 L8 12 L4 10.5 Z" fill="#f6f6f8" stroke="#d8d8dc" stroke-width=".6"/><path d="M6 10.5 L8.6 5.5 L7 4.9 L11.4 2.1 L13 6.9 L11.3 6.3 L8.6 11.5 Z" fill="#bcbcbc"/></svg>
<div class="a sep2" style="left:818px;"></div>
<svg class="a" style="left:824px;top:532.3px;" width="14" height="15" viewBox="0 0 14 15"><path d="M2 1 H9 L12 4 V13.5 H2 Z" fill="#f4f7fc" stroke="#aab4cc" stroke-width=".8"/><circle cx="6.5" cy="7" r="3.2" fill="#dce8f4" stroke="#a8bcd0" stroke-width=".9"/><path d="M8.8 9.6 L11.5 12.8" stroke="#d8a880" stroke-width="1.6"/></svg>
<svg class="a" style="left:842.5px;top:533.3px;" width="13" height="13" viewBox="0 0 13 13"><rect x="3" y="0.5" width="7" height="4" fill="#fff" stroke="#a9adb8" stroke-width=".7"/><rect x="0.8" y="4.2" width="11.4" height="5" rx="1" fill="#d5d8e0" stroke="#8c909c" stroke-width=".8"/><rect x="2.8" y="8" width="7.4" height="4.3" fill="#fff" stroke="#a0a4b0" stroke-width=".7"/></svg>
<div class="a sep2" style="left:860px;"></div>
<div class="a" style="left:866.5px;top:534.5px;width:11px;height:11px;border:1px solid #b4b4b4;border-radius:2px;background:#ececec;box-sizing:border-box;"></div>
<div class="t" style="left:869.1px;top:534px;font-family:'Liberation Serif',serif;font-size:9px;color:#a8a8a8;text-shadow:none;font-weight:bold;">B</div>
<div class="a" style="left:885.5px;top:534.5px;width:11px;height:11px;border:1px solid #b4b4b4;border-radius:2px;background:#ececec;box-sizing:border-box;"></div>
<div class="t" style="left:888.1px;top:534px;font-family:'Liberation Serif',serif;font-size:9px;color:#a8a8a8;text-shadow:none;font-style:italic;">I</div>
<div class="a" style="left:904px;top:534.5px;width:11px;height:11px;border:1px solid #b4b4b4;border-radius:2px;background:#ececec;box-sizing:border-box;"></div>
<div class="t" style="left:906.6px;top:534px;font-family:'Liberation Serif',serif;font-size:9px;color:#a8a8a8;text-shadow:none;text-decoration:underline;">U</div>
<div class="a sep2" style="left:921px;"></div>
<div class="a" style="left:927.5px;top:535px;width:11px;height:11px;border:1px solid #a8a8a8;border-radius:1px;background:#e4e4e4;box-sizing:border-box;"></div>
<div class="a" style="left:930.0px;top:538px;width:6px;height:5px;background:repeating-linear-gradient(#9a9a9a 0,#9a9a9a 1px,#e4e4e4 1px,#e4e4e4 2px);"></div>
<div class="a" style="left:946px;top:535px;width:11px;height:11px;border:1px solid #a8a8a8;border-radius:1px;background:#e4e4e4;box-sizing:border-box;"></div>
<div class="a" style="left:948.5px;top:538px;width:6px;height:5px;background:repeating-linear-gradient(#9a9a9a 0,#9a9a9a 1px,#e4e4e4 1px,#e4e4e4 2px);"></div>
<svg class="a" style="left:965px;top:534.5px;" width="13" height="12" viewBox="0 0 13 12"><path d="M4 2 H12 M4 6 H12 M4 10 H12" stroke="#9a9a9a" stroke-width="1.5"/><circle cx="1.5" cy="2" r="1" fill="#8a8a8a"/><circle cx="1.5" cy="6" r="1" fill="#8a8a8a"/><circle cx="1.5" cy="10" r="1" fill="#8a8a8a"/></svg>
<div class="t" style="left:998.3px;top:529.5px;font-size:11.5px;font-weight:bold;letter-spacing:-1px;">&#xbb;</div>
<div class="arr s" style="left:1000px;top:544.3px;"></div>
<div class="a" style="left:800px;top:735px;width:209px;height:33px;background:#fff;"></div>
<div class="a" style="left:1007px;top:735px;width:1.5px;height:31px;background:#c4c4c4;"></div>
<div class="a" style="left:789px;top:765.5px;width:220px;height:1.2px;background:#a8a8a8;"></div>
<div class="t" style="left:809.3px;top:749.2px;font-family:'Liberation Mono',monospace;font-weight:bold;font-size:13px;color:#3f0e10;transform:scaleX(1.268);transform-origin:0 0;line-height:16px;">www.todolistsoft.com</div>
<div class="a" style="left:778.8px;top:290px;width:5.2px;height:6.2px;background:repeating-linear-gradient(#505050 0,#505050 1.1px,transparent 1.1px,transparent 2.5px);"></div>
<svg class="a" style="left:779.3px;top:64px;" width="6" height="4" viewBox="0 0 6 4"><path d="M.4 3.6 L3 .6 L5.6 3.6 L4.6 3.6 L3 2.2 L1.4 3.6 Z" fill="#3c3c3c"/></svg>
<svg class="a" style="left:779px;top:757.5px;" width="7" height="5" viewBox="0 0 7 5"><path d="M.6 1 L3.3 3.8 L6 1 Z" fill="#4a4a4a"/></svg>
<div class="a" style="left:0;top:766px;width:789px;height:2px;background:#dcdcdc;"></div>
</div></body></html>
